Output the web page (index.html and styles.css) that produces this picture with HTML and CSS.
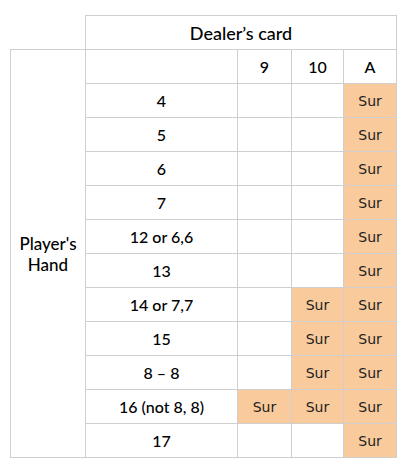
FILE: index.html
```html
<!DOCTYPE html>
<html lang="en">
<head>
<meta charset="utf-8">
<link rel="stylesheet" href="styles.css">
</head>
<body>
<table class="chart">
  <colgroup>
    <col class="c-side">
    <col class="c-hand">
    <col class="c-9">
    <col class="c-10">
    <col class="c-a">
  </colgroup>
  <tr>
    <td class="blank"></td>
    <td class="dealer" colspan="4">Dealer’s card</td>
  </tr>
  <tr>
    <td class="side" rowspan="12">Player's<br>Hand</td>
    <td></td>
    <td class="hd">9</td>
    <td class="hd">10</td>
    <td class="hd">A</td>
  </tr>
  <tr><td class="hand">4</td><td></td><td></td><td class="sur">Sur</td></tr>
  <tr><td class="hand">5</td><td></td><td></td><td class="sur">Sur</td></tr>
  <tr><td class="hand">6</td><td></td><td></td><td class="sur">Sur</td></tr>
  <tr><td class="hand">7</td><td></td><td></td><td class="sur">Sur</td></tr>
  <tr><td class="hand">12 or 6,6</td><td></td><td></td><td class="sur">Sur</td></tr>
  <tr><td class="hand">13</td><td></td><td></td><td class="sur">Sur</td></tr>
  <tr><td class="hand">14 or 7,7</td><td></td><td class="sur">Sur</td><td class="sur">Sur</td></tr>
  <tr><td class="hand">15</td><td></td><td class="sur">Sur</td><td class="sur">Sur</td></tr>
  <tr><td class="hand">8 – 8</td><td></td><td class="sur">Sur</td><td class="sur">Sur</td></tr>
  <tr><td class="hand">16 (not 8, 8)</td><td class="sur">Sur</td><td class="sur">Sur</td><td class="sur">Sur</td></tr>
  <tr><td class="hand">17</td><td></td><td></td><td class="sur">Sur</td></tr>
</table>
</body>
</html>
```
FILE: styles.css
```css
html, body {
  margin: 0;
  padding: 0;
  background: #fff;
}
body {
  padding: 15px 0 0 10px;
  font-family: Lato, "Liberation Sans", sans-serif;
  color: #000;
}
.chart {
  border-collapse: collapse;
  table-layout: fixed;
  width: 387px;
}
.c-side { width: 75px; }
.c-hand { width: 152px; }
.c-9 { width: 54px; }
.c-10 { width: 52px; }
.c-a { width: 53px; }
.chart td {
  border: 1px solid #cfcfcf;
  height: 34px;
  padding: 0;
  text-align: center;
  vertical-align: middle;
  font-size: 16px;
  font-weight: 500;
  box-sizing: border-box;
}
.chart td.blank {
  border: none;
}
.chart td.dealer {
  font-size: 18px;
}
.chart td.side {
  font-size: 17px;
  line-height: 21px;
}
.chart td.sur {
  background: #f9cb9c;
  font-family: "DejaVu Sans", Verdana, sans-serif;
  font-size: 14px;
  font-weight: 400;
  color: #222;
}
```
